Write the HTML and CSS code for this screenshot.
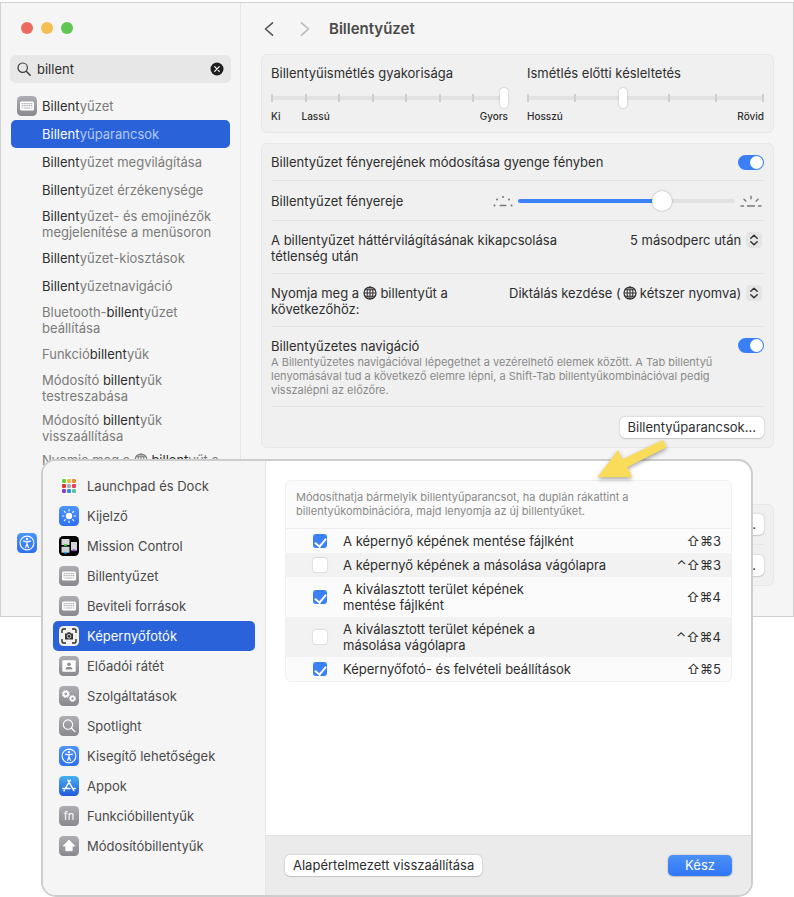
FILE: index.html
```html
<!DOCTYPE html>
<html lang="hu">
<head>
    <meta charset="UTF-8">
    <meta name="viewport" content="width=device-width, initial-scale=1.0">
    <title>Billentyűzet</title>
    <link rel="stylesheet" href="styles.css">
</head>
<body>
    <!-- Shared icons -->
    <svg class="defs" width="0" height="0" aria-hidden="true">
        <defs>
            <linearGradient id="grey" x1="0" y1="0" x2="0" y2="1">
                <stop offset="0" stop-color="#aeadb3"/>
                <stop offset="1" stop-color="#89888e"/>
            </linearGradient>
            <linearGradient id="blue" x1="0" y1="0" x2="0" y2="1">
                <stop offset="0" stop-color="#4b95fb"/>
                <stop offset="1" stop-color="#2f6ff5"/>
            </linearGradient>
            <linearGradient id="store" x1="0" y1="0" x2="0" y2="1">
                <stop offset="0" stop-color="#45b0f0"/>
                <stop offset="1" stop-color="#2558d8"/>
            </linearGradient>
            <symbol id="keyboard" viewBox="0 0 20 20">
                <rect width="20" height="20" rx="4.5" fill="url(#grey)"/>
                <rect x="3" y="5.5" width="14" height="9" rx="1.5" fill="#fff"/>
                <path d="M4.6 7.6h10.8M4.6 9.6h10.8" stroke="#a5a4aa" stroke-width="1.2" stroke-dasharray="1.2 .7"/>
                <path d="M4.6 12h1.2M6.6 12h6.8M14.2 12h1.2" stroke="#b5b4ba" stroke-width="1.2"/>
            </symbol>
            <symbol id="access" viewBox="0 0 20 20">
                <rect width="20" height="20" rx="4.5" fill="url(#blue)"/>
                <circle cx="10" cy="10" r="6.9" fill="none" stroke="#fff" stroke-width="1.1"/>
                <circle cx="10" cy="6.1" r="1.2" fill="#fff"/>
                <path d="M6.5 8.2l3.5.7 3.5-.7M10 8.9v2.2M10 11l-1.5 3.6M10 11l1.5 3.6" fill="none" stroke="#fff" stroke-width="1.2" stroke-linecap="round"/>
            </symbol>
            <symbol id="globe" viewBox="0 0 14 14">
                <circle cx="7" cy="7" r="6" fill="none" stroke="currentColor" stroke-width="1.2"/>
                <ellipse cx="7" cy="7" rx="2.9" ry="6" fill="none" stroke="currentColor"/>
                <path d="M7 1v12M1 7h12M2 3.8h10M2 10.2h10" stroke="currentColor" fill="none"/>
            </symbol>
            <symbol id="updown" viewBox="0 0 16 16">
                <path d="M4.8 6.2L8 3.2l3.2 3M4.8 9.8l3.2 3 3.2-3" fill="none" stroke="#333" stroke-width="1.5" stroke-linecap="round" stroke-linejoin="round"/>
            </symbol>
        </defs>
    </svg>

    <div class="window">
        <aside class="sidebar">
            <div class="lights">
                <span class="light red"></span>
                <span class="light yellow"></span>
                <span class="light green"></span>
            </div>

            <div class="search">
                <svg width="14" height="14" viewBox="0 0 14 14"><circle cx="5.7" cy="5.7" r="4.7" fill="none" stroke="#3c3c3c" stroke-width="1.2"/><path d="M9.2 9.2l4 4" stroke="#3c3c3c" stroke-width="1.4" stroke-linecap="round"/></svg>
                <input type="text" value="billent" aria-label="Keresés">
                <button type="button" class="clear" aria-label="Törlés">
                    <svg width="14" height="14" viewBox="0 0 14 14"><circle cx="7" cy="7" r="6.5" fill="#1e1e1e"/><path d="M4.7 4.7l4.6 4.6M9.3 4.7L4.7 9.3" stroke="#fff" stroke-width="1.2" stroke-linecap="round"/></svg>
                </button>
            </div>

            <ul class="results">
                <li class="top"><svg class="icon"><use href="#keyboard"/></svg><span><b>Billent</b>yűzet</span></li>
                <li class="selected"><span><b>Billent</b>yűparancsok</span></li>
                <li><span><b>Billent</b>yűzet megvilágítása</span></li>
                <li><span><b>Billent</b>yűzet érzékenysége</span></li>
                <li><span><b>Billent</b>yűzet- és emojinézők megjelenítése a menüsoron</span></li>
                <li><span><b>Billent</b>yűzet-kiosztások</span></li>
                <li><span><b>Billent</b>yűzetnavigáció</span></li>
                <li><span>Bluetooth-<b>billent</b>yűzet beállítása</span></li>
                <li><span>Funkció<b>billent</b>yűk</span></li>
                <li><span>Módosító <b>billent</b>yűk testreszabása</span></li>
                <li><span>Módosító <b>billent</b>yűk visszaállítása</span></li>
                <li><span>Nyomja meg a <svg class="globe"><use href="#globe"/></svg> <b>billent</b>yűt a következőhöz:</span></li>
                <li class="top next"><svg class="icon"><use href="#access"/></svg></li>
            </ul>
        </aside>

        <main class="main">
            <header class="header">
                <button type="button" class="nav" aria-label="Vissza"><svg width="10" height="16" viewBox="0 0 10 16"><path d="M8.5 1.8L1.5 8l7 6.2" fill="none" stroke="#555" stroke-width="1.6" stroke-linecap="round" stroke-linejoin="round"/></svg></button>
                <button type="button" class="nav" aria-label="Előre"><svg width="10" height="16" viewBox="0 0 10 16"><path d="M1.5 1.8l7 6.2-7 6.2" fill="none" stroke="#b8b8b8" stroke-width="1.6" stroke-linecap="round" stroke-linejoin="round"/></svg></button>
                <h1>Billentyűzet</h1>
            </header>

            <section class="panel sliders">
                <div class="slider">
                    <label for="rate">Billentyűismétlés gyakorisága</label>
                    <div class="track">
                        <div class="ticks"><i></i><i></i><i></i><i></i><i></i><i></i><i></i><i></i></div>
                        <input type="range" id="rate" class="stepped" min="0" max="7" value="7">
                    </div>
                    <div class="scale"><span>Ki</span><span>Lassú</span><span class="end">Gyors</span></div>
                </div>
                <div class="slider">
                    <label for="delay">Ismétlés előtti késleltetés</label>
                    <div class="track">
                        <div class="ticks"><i></i><i></i><i></i><i></i><i></i><i></i></div>
                        <input type="range" id="delay" class="stepped" min="0" max="5" value="2">
                    </div>
                    <div class="scale"><span>Hosszú</span><span class="end">Rövid</span></div>
                </div>
            </section>

            <section class="panel">
                <div class="row">
                    <label for="dim">Billentyűzet fényerejének módosítása gyenge fényben</label>
                    <input type="checkbox" id="dim" class="switch" role="switch" checked>
                </div>
                <div class="row medium">
                    <label for="brightness">Billentyűzet fényereje</label>
                    <div class="brightness">
                        <svg width="20" height="14" viewBox="0 0 20 14" fill="#777"><circle cx="1.5" cy="11.5" r="1"/><circle cx="4" cy="5.5" r="1"/><circle cx="10" cy="3" r="1"/><circle cx="16" cy="5.5" r="1"/><circle cx="18.5" cy="11.5" r="1"/><rect x="6.5" y="10.7" width="7" height="1.6" rx=".8"/></svg>
                        <input type="range" id="brightness" class="level" min="0" max="100" value="68">
                        <svg width="22" height="14" viewBox="0 0 22 14" stroke="#777" stroke-width="1.4" stroke-linecap="round"><path d="M1 12h2.5M7.5 12h7M18.5 12H21M4 5.2l1.8 1.8M18 5.2l-1.8 1.8M11 2.2v2.6"/></svg>
                    </div>
                </div>
                <div class="row tall">
                    <label for="off" class="narrow">A billentyűzet háttérvilágításának kikapcsolása tétlenség után</label>
                    <div class="picker">
                        <select id="off"><option>5 másodperc után</option></select>
                        <svg class="knob"><use href="#updown"/></svg>
                    </div>
                </div>
                <div class="row tall">
                    <label for="press">Nyomja meg a <svg class="globe"><use href="#globe"/></svg> billentyűt a következőhöz:</label>
                    <div class="picker">
                        <select id="press"><option>Diktálás kezdése (&emsp;&thinsp; kétszer nyomva)</option></select>
                        <svg class="globe over"><use href="#globe"/></svg>
                        <svg class="knob"><use href="#updown"/></svg>
                    </div>
                </div>
                <div class="row tall">
                    <div>
                        <label for="navigation">Billentyűzetes navigáció</label>
                        <p class="hint">A Billentyűzetes navigációval lépegethet a vezérelhető elemek között. A Tab billentyű lenyomásával tud a következő elemre lépni, a Shift-Tab billentyűkombinációval pedig visszalépni az előzőre.</p>
                    </div>
                    <input type="checkbox" id="navigation" class="switch" role="switch" checked>
                </div>
                <div class="row medium">
                    <button type="button" class="btn">Billentyűparancsok...</button>
                </div>
            </section>

            <section class="panel lower">
                <div class="row medium"><button type="button" class="btn">Szerkesztés...</button></div>
                <div class="row medium"><button type="button" class="btn">Szerkesztés...</button></div>
            </section>
        </main>
    </div>

    <!-- Shortcuts sheet -->
    <div class="sheet" role="dialog" aria-label="Billentyűparancsok">
        <ul class="categories">
            <li>
                <svg class="icon" viewBox="0 0 20 20"><rect x=".3" y=".3" width="19.4" height="19.4" rx="4.5" fill="#fdfdfd" stroke="#e6e6e6" stroke-width=".6"/><rect x="3" y="3" width="4" height="4" rx="1" fill="#62d13f"/><rect x="8" y="3" width="4" height="4" rx="1" fill="#f4b73b"/><rect x="13" y="3" width="4" height="4" rx="1" fill="#ef8a2f"/><rect x="3" y="8" width="4" height="4" rx="1" fill="#e8362e"/><rect x="8" y="8" width="4" height="4" rx="1" fill="#a9aeb2"/><rect x="13" y="8" width="4" height="4" rx="1" fill="#ee3d57"/><rect x="3" y="13" width="4" height="4" rx="1" fill="#8b3fd0"/><rect x="8" y="13" width="4" height="4" rx="1" fill="#2e86ef"/><rect x="13" y="13" width="4" height="4" rx="1" fill="#55c99a"/></svg>
                Launchpad és Dock
            </li>
            <li>
                <svg class="icon" viewBox="0 0 20 20"><rect width="20" height="20" rx="4.5" fill="url(#blue)"/><circle cx="10" cy="10" r="3.2" fill="#fff"/><path d="M10 3.5v1.3M10 15.2v1.3M3.5 10h1.3M15.2 10h1.3M5.4 5.4l.9.9M13.7 13.7l.9.9M5.4 14.6l.9-.9M13.7 6.3l.9-.9" stroke="#fff" stroke-width="1.2" stroke-linecap="round"/></svg>
                Kijelző
            </li>
            <li>
                <svg class="icon" viewBox="0 0 20 20"><rect width="20" height="20" rx="4.5" fill="#000"/><rect x="2.5" y="3" width="8" height="6" fill="#d5d8d5"/><rect x="2.5" y="10.7" width="8" height="6" fill="#cdd1d3"/><rect x="12" y="6" width="6" height="8.5" fill="#d4d3d8"/><path d="M5 9h3" stroke="#3fd23b" stroke-width="1.8"/><path d="M5 16.7h3" stroke="#36a5ef" stroke-width="1.6"/><path d="M13.5 14.3h3" stroke="#9d45dc" stroke-width="1.8"/></svg>
                Mission Control
            </li>
            <li><svg class="icon"><use href="#keyboard"/></svg>Billentyűzet</li>
            <li><svg class="icon"><use href="#keyboard"/></svg>Beviteli források</li>
            <li class="selected">
                <svg class="icon" viewBox="0 0 20 20"><rect width="20" height="20" rx="4.5" fill="#f2f1ee"/><path d="M3 7V4.5Q3 3 4.5 3H7M13 3h2.5Q17 3 17 4.5V7M17 13v2.5q0 1.5-1.5 1.5H13M7 17H4.5Q3 17 3 15.5V13" fill="none" stroke="#2b2b2b" stroke-width="1.4"/><path d="M6 7.5h2l.8-1.3h2.4l.8 1.3h2v6H6z" fill="#333"/><circle cx="10" cy="10.3" r="1.9" fill="none" stroke="#eee" stroke-width=".8"/></svg>
                Képernyőfotók
            </li>
            <li>
                <svg class="icon" viewBox="0 0 20 20"><rect width="20" height="20" rx="4.5" fill="url(#grey)"/><rect x="3.3" y="4.3" width="13.4" height="11.4" rx="1" fill="#fff"/><circle cx="10" cy="8.2" r="1.8" fill="#8e8d93"/><path d="M6.5 13.5q0-2.7 3.5-2.7t3.5 2.7z" fill="#8e8d93"/></svg>
                Előadói rátét
            </li>
            <li>
                <svg class="icon" viewBox="0 0 20 20"><rect width="20" height="20" rx="4.5" fill="url(#grey)"/><g fill="none" stroke="#fff"><circle cx="6.8" cy="8" r="2.3" stroke-width="1.8"/><circle cx="6.8" cy="8" r="3.6" stroke-width="1" stroke-dasharray="1.4 1.4"/><circle cx="13.5" cy="12.5" r="2" stroke-width="1.6"/><circle cx="13.5" cy="12.5" r="3.1" stroke-width="1" stroke-dasharray="1.2 1.2"/></g></svg>
                Szolgáltatások
            </li>
            <li>
                <svg class="icon" viewBox="0 0 20 20"><rect width="20" height="20" rx="4.5" fill="url(#grey)"/><circle cx="9" cy="8.6" r="4.7" fill="none" stroke="#fff" stroke-width="1.1"/><path d="M12.4 12l3.5 3.6" stroke="#fff" stroke-width="1.3" stroke-linecap="round"/></svg>
                Spotlight
            </li>
            <li><svg class="icon"><use href="#access"/></svg>Kisegítő lehetőségek</li>
            <li>
                <svg class="icon" viewBox="0 0 20 20"><rect width="20" height="20" rx="4.5" fill="url(#store)"/><path d="M11.2 4.2L6.3 12.6M8.9 4.2l5.9 10.3M3.8 12.6h7.2M13.7 12.6h2.5M5.3 14.3l-.3.6" stroke="#fff" stroke-width="1.5" stroke-linecap="round"/></svg>
                Appok
            </li>
            <li>
                <svg class="icon" viewBox="0 0 20 20"><rect width="20" height="20" rx="4.5" fill="url(#grey)"/><text x="10" y="14" class="fn">fn</text></svg>
                Funkcióbillentyűk
            </li>
            <li>
                <svg class="icon" viewBox="0 0 20 20"><rect width="20" height="20" rx="4.5" fill="url(#grey)"/><path d="M10 4l5.8 6h-2.6v4.8H6.8V10H4.2z" fill="#fff" stroke="#fff" stroke-width=".8" stroke-linejoin="round"/></svg>
                Módosítóbillentyűk
            </li>
        </ul>

        <div class="content">
            <div class="shortcuts">
                <p class="hint">Módosíthatja bármelyik billentyűparancsot, ha duplán rákattint a billentyűkombinációra, majd lenyomja az új billentyűket.</p>
                <table>
                    <tr>
                        <td class="check"><input type="checkbox" id="s1" checked></td>
                        <td><label for="s1">A képernyő képének mentése fájlként</label></td>
                        <td class="keys">⇧⌘3</td>
                    </tr>
                    <tr>
                        <td class="check"><input type="checkbox" id="s2"></td>
                        <td><label for="s2">A képernyő képének a másolása vágólapra</label></td>
                        <td class="keys">⌃⇧⌘3</td>
                    </tr>
                    <tr>
                        <td class="check"><input type="checkbox" id="s3" checked></td>
                        <td><label for="s3">A kiválasztott terület képének<br>mentése fájlként</label></td>
                        <td class="keys">⇧⌘4</td>
                    </tr>
                    <tr>
                        <td class="check"><input type="checkbox" id="s4"></td>
                        <td><label for="s4">A kiválasztott terület képének a<br>másolása vágólapra</label></td>
                        <td class="keys">⌃⇧⌘4</td>
                    </tr>
                    <tr>
                        <td class="check"><input type="checkbox" id="s5" checked></td>
                        <td><label for="s5">Képernyőfotó- és felvételi beállítások</label></td>
                        <td class="keys">⇧⌘5</td>
                    </tr>
                </table>
            </div>
            <footer class="footer">
                <button type="button" class="btn">Alapértelmezett visszaállítása</button>
                <button type="button" class="btn primary">Kész</button>
            </footer>
        </div>
    </div>

    <svg class="arrow" width="74" height="40" viewBox="0 0 74 40" aria-hidden="true"><path d="M67 1l3.5 7.3L31.5 28l4.5 10.3H1.5L22 11l4.5 9.3z" fill="#fadb5a"/></svg>
</body>
</html>
```
FILE: styles.css
```css
* {
    box-sizing: border-box;
}

body {
    position: relative;
    margin: 0;
    padding: 2px 0 1px;
    background: #fff;
    color: #2e2e2e;
    font: 13px/16px Inter, "DejaVu Sans", sans-serif;
}

button, input, select {
    margin: 0;
    font: inherit;
    color: inherit;
}

ul {
    list-style: none;
    margin: 0;
    padding: 0;
}

.defs {
    position: absolute;
}

.icon {
    flex: none;
    width: 20px;
    height: 20px;
}

.globe {
    width: 14px;
    height: 14px;
    vertical-align: -2px;
}

/* Settings window */
.window {
    display: flex;
    min-height: 615px;
    background: #f5f5f5;
    border: 1px solid #d0d0d0;
}

.sidebar {
    flex: none;
    width: 240px;
    padding: 0 9px;
    border-right: 1px solid #e6e6e6;
}

.lights {
    display: flex;
    align-items: center;
    gap: 8px;
    height: 50px;
    padding-left: 11px;
}

.light {
    width: 12px;
    height: 12px;
    border-radius: 50%;
}

.red { background: #ed6a5e; }
.yellow { background: #f4bf4f; }
.green { background: #61c554; }

.search {
    display: flex;
    align-items: center;
    gap: 6px;
    height: 28px;
    margin: 2px 0 9px;
    padding: 0 7px;
    background: #e7e7e7;
    border-radius: 6px;
}

.search input {
    flex: 1;
    min-width: 0;
    padding: 0;
    background: none;
    border: none;
    outline: none;
}

.clear {
    display: flex;
    padding: 0;
    background: none;
    border: none;
}

.results li {
    display: flex;
    align-items: center;
    gap: 5px;
    min-height: 28px;
    margin: 0 1px;
    padding: 4px 8px 4px 31px;
    border-radius: 5px;
    color: #7b7b7b;
}

.results b {
    font-weight: 400;
    color: #2e2e2e;
}

.results .top {
    padding-left: 6px;
}

.results .next {
    margin-top: 41px;
}

.results .selected {
    background: #2962d9;
    color: #b5c9f2;
}

.results .selected b {
    color: #fff;
}

.main {
    flex: 1;
    padding: 0 19px 0 20px;
}

.header {
    display: flex;
    align-items: center;
    height: 51px;
    padding-left: 3px;
}

.nav {
    display: flex;
    margin-right: 26px;
    padding: 0;
    background: none;
    border: none;
}

.nav + h1 {
    margin: 0 0 0 -7px;
    font-size: 15px;
    font-weight: 600;
    color: #4a4a4a;
}

.panel {
    margin-bottom: 10px;
    padding: 0 9px;
    background: #f0f0f0;
    border: 1px solid #e7e7e7;
    border-radius: 6px;
}

.sliders {
    display: grid;
    grid-template-columns: 1fr 1fr;
    gap: 19px;
    padding: 10px 9px 9px;
}

.slider label {
    display: block;
}

.track {
    position: relative;
    height: 20px;
    margin-top: 7px;
}

.ticks {
    display: flex;
    justify-content: space-between;
    align-items: center;
    height: 20px;
    background: linear-gradient(#e2e2e2, #e2e2e2) center / 100% 4px no-repeat;
}

.ticks i {
    width: 2px;
    height: 8px;
    background: #cfcfcf;
}

.stepped, .level {
    appearance: none;
    height: 20px;
    background: none;
}

.stepped {
    position: absolute;
    inset: 0;
    width: 100%;
}

.stepped::-webkit-slider-thumb {
    appearance: none;
    width: 8px;
    height: 20px;
    background: #fff;
    border-radius: 4px;
    box-shadow: 0 0 2px rgba(0, 0, 0, 0.3);
}

.scale {
    display: flex;
    gap: 21px;
    margin-top: 1px;
    font-size: 10px;
    font-weight: 500;
    line-height: 14px;
}

.end {
    margin-left: auto;
}

.row {
    display: flex;
    justify-content: space-between;
    align-items: center;
    gap: 16px;
    min-height: 37px;
    border-bottom: 1px solid #e4e4e4;
}

.row:last-child {
    border-bottom: none;
}

.row > .btn {
    margin-left: auto;
}

.medium {
    min-height: 40px;
}

.tall {
    align-items: flex-start;
    padding: 11px 0 9px;
}

.narrow {
    max-width: 310px;
}

.brightness {
    display: flex;
    align-items: center;
    gap: 5px;
    padding-right: 2px;
}

.level {
    width: 217px;
}

.level::-webkit-slider-runnable-track {
    height: 4px;
    border-radius: 2px;
    background: linear-gradient(to right, #3b82f6 67%, #e1e1e1 67%);
}

.level::-webkit-slider-thumb {
    appearance: none;
    width: 20px;
    height: 20px;
    margin-top: -8px;
    background: #fff;
    border-radius: 50%;
    box-shadow: 0 0 2px rgba(0, 0, 0, 0.35);
}

.switch {
    appearance: none;
    flex: none;
    display: flex;
    justify-content: flex-end;
    width: 26px;
    height: 15px;
    padding: 1px;
    background: #3a7ff6;
    border-radius: 8px;
}

.switch::before {
    content: "";
    width: 13px;
    height: 13px;
    background: #fff;
    border-radius: 50%;
}

.picker {
    position: relative;
    display: flex;
    align-items: center;
    flex: none;
    gap: 4px;
    padding-right: 2px;
}

.picker select {
    appearance: none;
    padding: 0;
    background: none;
    border: none;
}

.knob {
    width: 16px;
    height: 16px;
    background: #e5e5e5;
    border-radius: 4px;
}

.over {
    position: absolute;
    top: 1px;
    right: 127px;
    pointer-events: none;
}

.hint {
    margin: 1px 0 0;
    font-size: 11px;
    line-height: 14px;
    color: #8a8a8a;
}

.btn {
    height: 21px;
    padding: 0 8px;
    line-height: 21px;
    background: #fff;
    border: none;
    border-radius: 5px;
    box-shadow: 0 0 2px rgba(0, 0, 0, 0.25), 0 1px 1px rgba(0, 0, 0, 0.1);
}

.primary {
    min-width: 64px;
    background: linear-gradient(#4b91f8, #3076f6);
    color: #fff;
}

.lower {
    margin-top: 56px;
    margin-bottom: 0;
}

/* Sheet, pulled up over the lower part of the window */
.sheet {
    position: relative;
    display: flex;
    min-height: 438px;
    margin: -158px 41px 0;
    background: #fff;
    border: 2px solid #cdcdcd;
    border-radius: 15px;
    overflow: hidden;
}

.categories {
    flex: none;
    width: 223px;
    padding: 10px;
    background: #f5f5f5;
    border-right: 1px solid #e6e6e6;
}

.categories li {
    display: flex;
    align-items: center;
    gap: 8px;
    height: 30px;
    padding: 0 6px;
    border-radius: 5px;
    color: #4a4a4a;
}

.categories .selected {
    background: #2962d9;
    color: #fff;
}

.fn {
    font-size: 11px;
    fill: #fff;
    text-anchor: middle;
}

.content {
    flex: 1;
    display: flex;
    flex-direction: column;
}

.shortcuts {
    margin: 19px 19px auto;
    background: #fbfbfb;
    border: 1px solid #f0f0f0;
    border-radius: 6px;
    overflow: hidden;
}

.shortcuts .hint {
    margin: 0;
    padding: 9px 80px 10px 10px;
    border-bottom: 1px solid #ededed;
}

.shortcuts table {
    width: 100%;
    border-collapse: collapse;
}

.shortcuts td {
    padding: 4px 0;
    vertical-align: middle;
}

.shortcuts tr:nth-child(even) {
    background: #f2f2f2;
}

.shortcuts .check {
    width: 57px;
    padding: 0 0 0 27px;
}

.check input {
    display: block;
    appearance: none;
    width: 14px;
    height: 14px;
    background: #fff;
    border-radius: 3px;
    box-shadow: 0 0 1px 1px rgba(0, 0, 0, 0.08);
}

.check input:checked {
    padding-top: 2px;
    background: #3a80f7;
    box-shadow: none;
}

.check input:checked::before {
    content: "";
    display: block;
    width: 5px;
    height: 9px;
    margin: 0 auto;
    border: solid #fff;
    border-width: 0 2px 2px 0;
    transform: rotate(40deg);
}

.shortcuts .keys {
    padding-right: 10px;
    text-align: right;
    white-space: nowrap;
}

.footer {
    display: flex;
    justify-content: space-between;
    align-items: center;
    height: 60px;
    padding: 0 19px;
    background: #ebebeb;
    border-top: 1px solid #dedede;
}

.arrow {
    position: absolute;
    top: 439px;
    right: 124px;
    filter: drop-shadow(0 2px 2px rgba(0, 0, 0, 0.35));
}
```
